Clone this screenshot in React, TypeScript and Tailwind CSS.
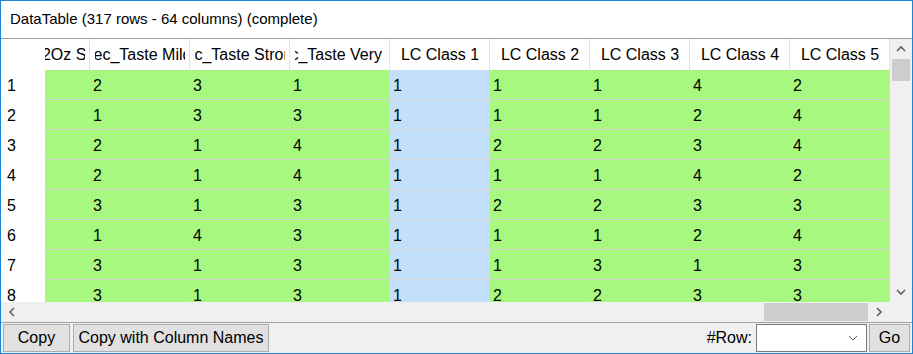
import React from 'react'

// header labels; long names are scrolled inside their cell by a fixed class
const columns: { label: string; shift?: string }[] = [
  { label: 'Size_12Oz Small', shift: 'ml-[-2px]' },
  { label: 'Spec_Taste Mild', shift: 'ml-[-21px]' },
  { label: 'Spec_Taste Strong', shift: 'ml-[-29px]' },
  { label: 'Spec_Taste Very Strong', shift: 'ml-[-33px]' },
  { label: 'LC Class 1' },
  { label: 'LC Class 2' },
  { label: 'LC Class 3' },
  { label: 'LC Class 4' },
  { label: 'LC Class 5' },
]

const rows: number[][] = [
  [2, 2, 3, 1, 1, 1, 1, 4, 2],
  [1, 1, 3, 3, 1, 1, 1, 2, 4],
  [2, 2, 1, 4, 1, 2, 2, 3, 4],
  [1, 2, 1, 4, 1, 1, 1, 4, 2],
  [3, 3, 1, 3, 1, 2, 2, 3, 3],
  [2, 1, 4, 3, 1, 1, 1, 2, 4],
  [1, 3, 1, 3, 1, 1, 3, 1, 3],
  [2, 3, 1, 3, 1, 2, 2, 3, 3],
]

function Chevron({ dir }: { dir: 'up' | 'down' | 'left' | 'right' }) {
  const pts = {
    up: '1,6 5,2 9,6',
    down: '1,2 5,6 9,2',
    left: '6,1 2,5 6,9',
    right: '2,1 6,5 2,9',
  }[dir]
  const vertical = dir === 'up' || dir === 'down'
  return (
    <svg width={vertical ? 10 : 8} height={vertical ? 8 : 10} viewBox={vertical ? '0 0 10 8' : '0 0 8 10'}>
      <polyline points={pts} fill="none" stroke="#606060" strokeWidth="1.6" />
    </svg>
  )
}

function HeaderCell({ label, shift }: { label: string; shift?: string }) {
  return (
    <div className="w-[100px] shrink-0 h-full border-r border-[#e3e3e3] flex items-center bg-white pl-[5px] pr-[4px]">
      <div className={`flex-1 h-full flex items-center overflow-hidden whitespace-nowrap ${shift ? 'justify-start' : 'justify-center'}`}>
        <span className={`shrink-0 ${shift ?? ''}`}>{label}</span>
      </div>
    </div>
  )
}

export default function App() {
  return (
    <div
      className="w-[913px] h-[354px] border border-[#1a85d6] bg-white flex flex-col text-[16px] text-black overflow-hidden"
      style={{ fontFamily: '"Liberation Sans", Arial, sans-serif' }}
    >
      {/* title */}
      <div className="h-[37px] shrink-0 flex items-center pl-[9px] text-[15px]">
        DataTable (317 rows - 64 columns) (complete)
      </div>
      <div className="h-px shrink-0 bg-[#a0a0a0]" />

      {/* grid + vertical scrollbar */}
      <div className="flex h-[263px] shrink-0">
        <div className="w-[889px] flex overflow-hidden">
          {/* row header */}
          <div className="w-[44px] shrink-0 flex flex-col bg-white">
            <div className="h-[31px] shrink-0" />
            {rows.map((_, i) => (
              <div key={i} className="h-[30px] shrink-0 flex items-center pl-[6px] pt-[2px]">
                {i + 1}
              </div>
            ))}
          </div>
          {/* data area, scrolled horizontally */}
          <div className="flex-1 overflow-hidden">
            <div className="ml-[-55px] flex flex-col">
              <div className="h-[31px] flex shrink-0">
                {columns.map(c => (
                  <HeaderCell key={c.label} label={c.label} shift={c.shift} />
                ))}
              </div>
              {rows.map((r, i) => (
                <div key={i} className="h-[30px] flex shrink-0 border-b border-[#d6d6d6]">
                  {r.map((v, j) => (
                    <div
                      key={j}
                      className={`w-[100px] shrink-0 border-r border-[#d6d6d6] flex items-center pl-[3px] pt-[2px] ${j === 4 ? 'bg-[#c2e0fa]' : 'bg-[#a6f87e]'}`}
                    >
                      {j === 0 ? '' : v}
                    </div>
                  ))}
                </div>
              ))}
            </div>
          </div>
        </div>
        {/* vertical scrollbar */}
        <div className="w-[22px] shrink-0 bg-[#f0f0f0] flex flex-col items-center">
          <div className="h-[20px] w-full flex items-center justify-center">
            <Chevron dir="up" />
          </div>
          <div className="w-[18px] h-[22px] bg-[#cdcdcd]" />
          <div className="flex-1" />
          <div className="h-[20px] w-full flex items-center justify-center">
            <Chevron dir="down" />
          </div>
        </div>
      </div>

      {/* horizontal scrollbar */}
      <div className="h-[20px] shrink-0 bg-[#f0f0f0] flex items-center">
        <div className="w-[22px] flex justify-center">
          <Chevron dir="left" />
        </div>
        <div className="w-[741px]" />
        <div className="w-[104px] h-[18px] bg-[#cdcdcd]" />
        <div className="w-[22px] flex justify-center">
          <Chevron dir="right" />
        </div>
      </div>
      <div className="h-px shrink-0 bg-[#a0a0a0]" />

      {/* bottom bar */}
      <div className="h-[30px] shrink-0 bg-[#f0f0f0] flex items-center px-[2px] gap-[3px]">
        <button className="h-[28px] w-[67px] bg-[#e1e1e1] border border-[#adadad]">Copy</button>
        <button className="h-[28px] w-[196px] bg-[#e1e1e1] border border-[#adadad]">Copy with Column Names</button>
        <div className="flex-1" />
        <span className="mr-px">#Row:</span>
        <div className="h-[28px] w-[111px] bg-white border border-[#7a7a7a] flex items-center justify-end pr-[8px]">
          <svg width="10" height="6" viewBox="0 0 10 6">
            <polyline points="1,1 5,5 9,1" fill="none" stroke="#606060" strokeWidth="1" />
          </svg>
        </div>
        <button className="h-[28px] w-[41px] bg-[#e1e1e1] border border-[#adadad] ml-[-1px]">Go</button>
      </div>
    </div>
  )
}
